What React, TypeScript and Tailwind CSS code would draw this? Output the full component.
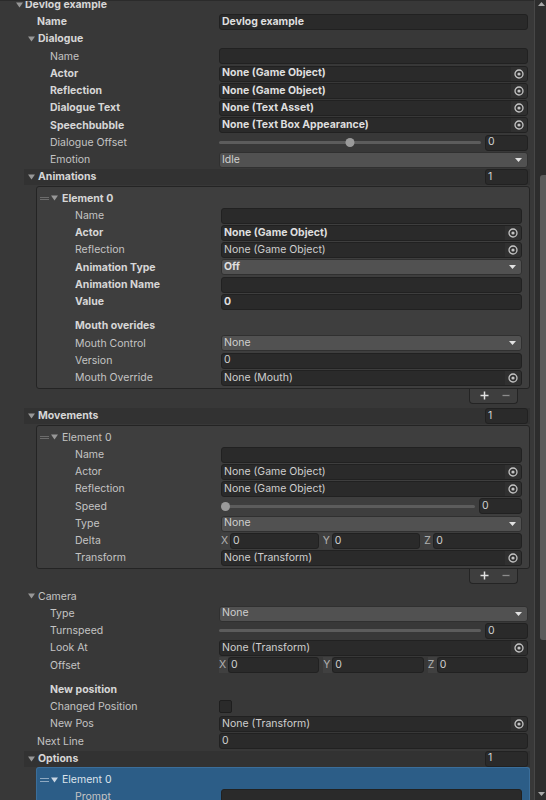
import React from 'react';

type Kids = { children?: React.ReactNode };

const L1 = 'w-[219px] pl-[37px]';
const L2 = 'w-[219px] pl-[50px]';
const LB = 'w-[184px] pl-[38px]';

function Tri({ light = false }: { light?: boolean }) {
  return (
    <svg width="7" height="6" viewBox="0 0 7 6" className="shrink-0">
      <polygon points="0,0.5 7,0.5 3.5,5.5" fill={light ? '#c9d6e3' : '#979797'} />
    </svg>
  );
}

function Handle({ light = false }: { light?: boolean }) {
  const c = light ? 'bg-[#8fa9c1]' : 'bg-[#6c6c6c]';
  return (
    <div className="flex flex-col gap-[1.5px] w-[9px] shrink-0">
      <div className={`h-[1px] ${c}`} />
      <div className={`h-[1px] ${c}`} />
    </div>
  );
}

function Target() {
  return (
    <svg width="10" height="10" viewBox="0 0 10 10">
      <circle cx="5" cy="5" r="4" fill="none" stroke="#c4c4c4" strokeWidth="1.3" />
      <circle cx="5" cy="5" r="1.6" fill="#c4c4c4" />
    </svg>
  );
}

function val(bold?: boolean) {
  return bold ? 'font-bold text-[#dedede]' : 'text-[#cfcfcf]';
}

function Text({ value = '', bold = false }: { value?: string; bold?: boolean }) {
  return (
    <div
      className={`flex-1 min-w-0 h-[16px] bg-[#2a2a2a] border border-[#212121] rounded-[3px] pl-[2px] flex items-center leading-none whitespace-nowrap ${val(bold)}`}
    >
      {value}
    </div>
  );
}

function Obj({ value, bold = false }: { value: string; bold?: boolean }) {
  return (
    <div className="flex-1 min-w-0 h-[16px] bg-[#2a2a2a] border border-[#212121] rounded-[3px] flex items-center leading-none">
      <span className={`flex-1 pl-[2px] whitespace-nowrap ${val(bold)}`}>{value}</span>
      <div className="w-[16px] h-full flex items-center justify-center bg-[#303030] rounded-r-[2px]">
        <Target />
      </div>
    </div>
  );
}

function Drop({ value, bold = false }: { value: string; bold?: boolean }) {
  return (
    <div className="flex-1 min-w-0 h-[16px] bg-[#515151] border border-[#303030] rounded-[3px] flex items-center pl-[2px] pr-[5px] leading-none">
      <span className={`flex-1 whitespace-nowrap ${val(bold)}`}>{value}</span>
      <svg width="7" height="4" viewBox="0 0 7 4">
        <polygon points="0,0 7,0 3.5,4" fill="#e2e2e2" />
      </svg>
    </div>
  );
}

function Slider({ thumb }: { thumb: 'mid' | 'left' | 'none' }) {
  return (
    <div className="flex-1 flex items-center gap-[4px]">
      <div className="flex-1 relative h-[16px] flex items-center">
        <div className="w-full h-[3px] bg-[#5c5c5c] rounded-full" />
        {thumb === 'mid' && (
          <div className="absolute left-1/2 -translate-x-1/2 w-[9px] h-[9px] rounded-full bg-[#9a9a9a]" />
        )}
        {thumb === 'left' && <div className="absolute left-0 w-[9px] h-[9px] rounded-full bg-[#9a9a9a]" />}
      </div>
      <div className="w-[43px] flex">
        <Text value="0" />
      </div>
    </div>
  );
}

function Vec() {
  return (
    <div className="flex-1 flex gap-[4px]">
      {['X', 'Y', 'Z'].map((a) => (
        <div key={a} className="flex-1 flex items-center min-w-0">
          <span className="w-[9px] h-[16px] flex items-center text-[#b0b0b0] bg-[#404040] leading-none">{a}</span>
          <Text value="0" />
        </div>
      ))}
    </div>
  );
}

function Check() {
  return <div className="w-[13px] h-[13px] bg-[#2a2a2a] border border-[#1e1e1e] rounded-[2px]" />;
}

function Row({ label, bold = false, lw, children }: { label: string; bold?: boolean; lw: string } & Kids) {
  return (
    <div className="flex items-center h-[17.25px]">
      <div className={`${lw} shrink-0 whitespace-nowrap ${bold ? 'font-bold text-[#d6d6d6]' : 'text-[#c4c4c4]'}`}>
        {label}
      </div>
      <div className="flex-1 flex items-center min-w-0">{children}</div>
    </div>
  );
}

function Fold({ title, bold = false, pl }: { title: string; bold?: boolean; pl: string }) {
  return (
    <div className={`flex items-center h-[17.25px] ${pl}`}>
      <Tri />
      <span className={`ml-[3px] ${bold ? 'font-bold text-[#d6d6d6]' : 'text-[#c4c4c4]'}`}>{title}</span>
    </div>
  );
}

function ListHeader({ title }: { title: string }) {
  return (
    <div className="flex items-center h-[17.25px] ml-[24px] mr-[4px]">
      <div className="flex-1 h-[16px] flex items-center bg-[#323232] pl-[4px] pr-[2px]">
        <Tri />
        <span className="ml-[3px] font-bold text-[#d6d6d6]">{title}</span>
        <div className="ml-auto w-[43px] flex">
          <Text value="1" />
        </div>
      </div>
    </div>
  );
}

function ElementHead({ bold = false, light = false }: { bold?: boolean; light?: boolean }) {
  return (
    <div className="flex items-center h-[17.25px] pl-[3px]">
      <Handle light={light} />
      <div className="ml-[2px]">
        <Tri light={light} />
      </div>
      <span
        className={`ml-[4px] ${bold ? 'font-bold text-[#d6d6d6]' : light ? 'text-[#dce4ec]' : 'text-[#c4c4c4]'}`}
      >
        Element 0
      </span>
    </div>
  );
}

function Box({ children, blue = false }: { blue?: boolean } & Kids) {
  return (
    <div
      className={`ml-[36px] mr-[4px] border rounded-[3px] pt-[3px] pb-[1px] pr-[7px] ${
        blue ? 'bg-[#2c5d87] border-[#3b6e9a] rounded-b-none border-b-0' : 'bg-[#3e3e3e] border-[#242424]'
      }`}
    >
      {children}
    </div>
  );
}

function Footer() {
  return (
    <div className="flex justify-end mr-[16px]">
      <div className="w-[49px] h-[15px] bg-[#3e3e3e] border border-t-0 border-[#242424] rounded-b-[4px] flex items-center pl-[10px] gap-[13px]">
        <svg width="9" height="9" viewBox="0 0 9 9">
          <path d="M4.5 0.5V8.5M0.5 4.5H8.5" stroke="#e2e2e2" strokeWidth="1.5" />
        </svg>
        <svg width="8" height="9" viewBox="0 0 8 9">
          <path d="M0.5 4.5H7.5" stroke="#8c8c8c" strokeWidth="1.3" />
        </svg>
      </div>
    </div>
  );
}

function Scrollbar() {
  return (
    <div className="w-[12px] shrink-0 h-full bg-[#2d2d2d] border-l border-[#474747] flex flex-col items-end">
      <svg width="7" height="5" viewBox="0 0 7 5" className="mt-[2px] mr-[1px]">
        <polygon points="0,4 7,4 3.5,0" fill="#a8a8a8" />
      </svg>
      <div className="h-[168px]" />
      <div className="w-[6px] h-[465px] bg-[#5b5b5b] rounded-l-[3px]" />
      <div className="flex-1" />
      <svg width="7" height="5" viewBox="0 0 7 5" className="mb-[3px] mr-[1px]">
        <polygon points="0,0 7,0 3.5,4" fill="#a8a8a8" />
      </svg>
    </div>
  );
}

export default function App() {
  return (
    <div className="w-[546px] h-[800px] overflow-hidden flex bg-[#383838] font-[Inter,'Noto_Sans',sans-serif] text-[10.5px]">
      <div className="flex-1 min-w-0 h-full overflow-hidden border-t border-[#2b2b2b]">
        <div className="-mt-[5px] pr-[6px]">
          <div className="flex items-center h-[17.25px] pl-[16px]">
            <Tri />
            <span className="ml-[2px] font-bold text-[#d6d6d6]">Devlog example</span>
          </div>
          <Row label="Name" bold lw={L1}>
            <Text value="Devlog example" bold />
          </Row>
          <Fold title="Dialogue" bold pl="pl-[28px]" />
          <Row label="Name" lw={L2}>
            <Text />
          </Row>
          <Row label="Actor" bold lw={L2}>
            <Obj value="None (Game Object)" bold />
          </Row>
          <Row label="Reflection" bold lw={L2}>
            <Obj value="None (Game Object)" bold />
          </Row>
          <Row label="Dialogue Text" bold lw={L2}>
            <Obj value="None (Text Asset)" bold />
          </Row>
          <Row label="Speechbubble" bold lw={L2}>
            <Obj value="None (Text Box Appearance)" bold />
          </Row>
          <Row label="Dialogue Offset" lw={L2}>
            <Slider thumb="mid" />
          </Row>
          <Row label="Emotion" lw={L2}>
            <Drop value="Idle" />
          </Row>
        </div>

        <ListHeader title="Animations" />
        <Box>
          <ElementHead bold />
          <Row label="Name" lw={LB}>
            <Text />
          </Row>
          <Row label="Actor" bold lw={LB}>
            <Obj value="None (Game Object)" bold />
          </Row>
          <Row label="Reflection" lw={LB}>
            <Obj value="None (Game Object)" />
          </Row>
          <Row label="Animation Type" bold lw={LB}>
            <Drop value="Off" bold />
          </Row>
          <Row label="Animation Name" bold lw={LB}>
            <Text />
          </Row>
          <Row label="Value" bold lw={LB}>
            <Text value="0" bold />
          </Row>
          <div className="h-[7px]" />
          <Row label="Mouth overides" bold lw={LB} />
          <Row label="Mouth Control" lw={LB}>
            <Drop value="None" />
          </Row>
          <Row label="Version" lw={LB}>
            <Text value="0" />
          </Row>
          <Row label="Mouth Override" lw={LB}>
            <Obj value="None (Mouth)" />
          </Row>
        </Box>
        <Footer />

        <div className="h-[4px]" />
        <ListHeader title="Movements" />
        <Box>
          <ElementHead />
          <Row label="Name" lw={LB}>
            <Text />
          </Row>
          <Row label="Actor" lw={LB}>
            <Obj value="None (Game Object)" />
          </Row>
          <Row label="Reflection" lw={LB}>
            <Obj value="None (Game Object)" />
          </Row>
          <Row label="Speed" lw={LB}>
            <Slider thumb="left" />
          </Row>
          <Row label="Type" lw={LB}>
            <Drop value="None" />
          </Row>
          <Row label="Delta" lw={LB}>
            <Vec />
          </Row>
          <Row label="Transform" lw={LB}>
            <Obj value="None (Transform)" />
          </Row>
        </Box>
        <Footer />

        <div className="h-[4px]" />
        <div className="pr-[6px]">
          <Fold title="Camera" pl="pl-[28px]" />
          <Row label="Type" lw={L2}>
            <Drop value="None" />
          </Row>
          <Row label="Turnspeed" lw={L2}>
            <Slider thumb="none" />
          </Row>
          <Row label="Look At" lw={L2}>
            <Obj value="None (Transform)" />
          </Row>
          <Row label="Offset" lw={L2}>
            <Vec />
          </Row>
          <div className="h-[7px]" />
          <Row label="New position" bold lw={L2} />
          <Row label="Changed Position" lw={L2}>
            <Check />
          </Row>
          <Row label="New Pos" lw={L2}>
            <Obj value="None (Transform)" />
          </Row>
          <Row label="Next Line" lw={L1}>
            <Text value="0" />
          </Row>
        </div>
        <ListHeader title="Options" />
        <Box blue>
          <ElementHead light />
          <Row label="Prompt" lw={LB}>
            <Text />
          </Row>
        </Box>
      </div>
      <Scrollbar />
    </div>
  );
}
